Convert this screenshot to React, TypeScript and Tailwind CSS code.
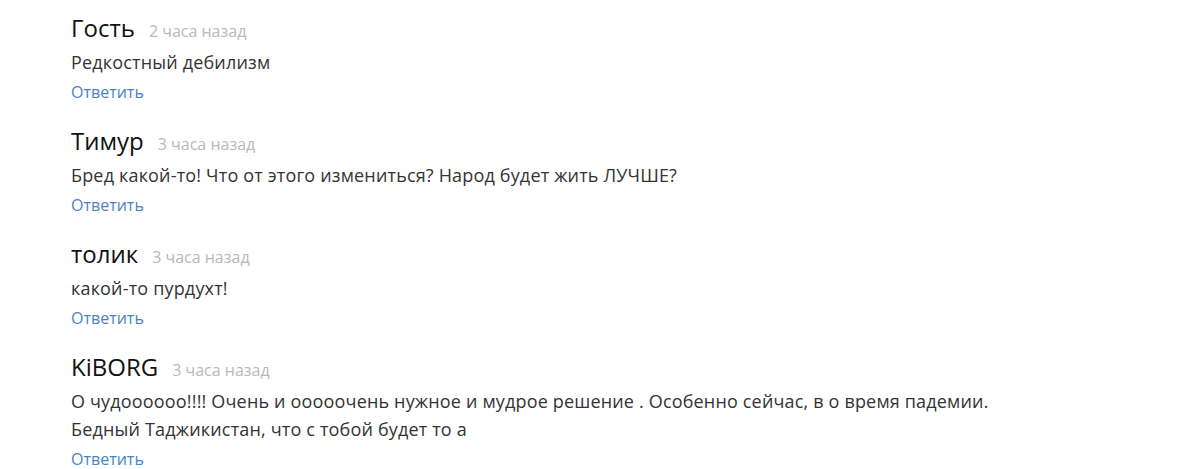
import React from "react";

type Comment = { name: string; time: string; text: string[] };

const COMMENTS: Comment[] = [
  { name: "Гость", time: "2 часа назад", text: ["Редкостный дебилизм"] },
  {
    name: "Тимур",
    time: "3 часа назад",
    text: ["Бред какой-то! Что от этого измениться? Народ будет жить ЛУЧШЕ?"],
  },
  { name: "толик", time: "3 часа назад", text: ["какой-то пурдухт!"] },
  {
    name: "KiBORG",
    time: "3 часа назад",
    text: [
      "О чудоооооо!!!! Очень и ооооочень нужное и мудрое решение . Особенно сейчас, в о время падемии.",
      "Бедный Таджикистан, что с тобой будет то а",
    ],
  },
];

export default function App() {
  return (
    <main
      className="min-h-screen bg-white pl-[71px] pt-[12px]"
      style={{ fontFamily: '"Open Sans", sans-serif' }}
    >
      {COMMENTS.map((c) => (
        <div key={c.name} className="mb-[21px]">
          <div className="flex items-baseline h-8">
            <span className="text-[24px] leading-8 text-[#111]">{c.name}</span>
            <span className="ml-[14px] text-[16px] text-[#b9b9b9]">{c.time}</span>
          </div>
          <div className="mt-1 text-[18px] leading-7 tracking-[0.17px] text-[#333]">
            {c.text.map((t) => (
              <div key={t}>{t}</div>
            ))}
          </div>
          <a className="block mt-1 text-[16px] leading-6 text-[#4a84c6]">Ответить</a>
        </div>
      ))}
    </main>
  );
}
